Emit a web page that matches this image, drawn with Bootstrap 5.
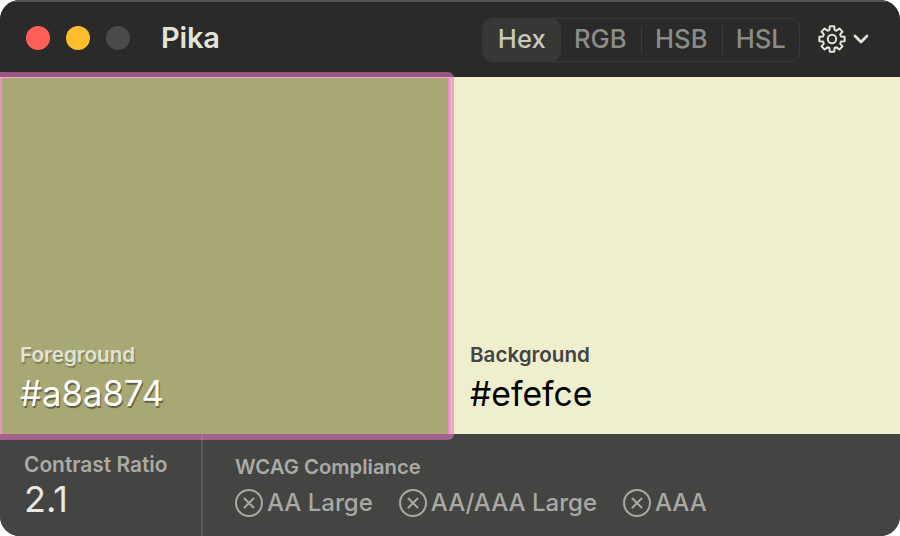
<!DOCTYPE html>
<html lang="en">
<head>
  <meta charset="UTF-8">
  <title>Pika</title>
  <link href="https://cdn.jsdelivr.net/npm/bootstrap@5.3.3/dist/css/bootstrap.min.css" rel="stylesheet">
  <style>
    body { background: #fff; font-family: Inter, "Liberation Sans", sans-serif; overflow: hidden; }
    .pika-window { width: 900px; height: 536px; border-radius: 20px; overflow: hidden; background: #444443; }

    .pika-titlebar { height: 77px; padding-left: 26px; padding-right: 31px; background: #2a2a2a; border-top: 2px solid #555; }
    .pika-light { width: 24px; height: 24px; border-radius: 50%; margin-right: 16px; margin-bottom: 3px; }
    .pika-title { margin-left: 15px; margin-bottom: 3px; font-size: 29px; font-weight: 600; color: #e3e3d8; letter-spacing: -.2px; }

    .pika-seg { width: 318px; height: 44px; border: 1px solid #383838; border-radius: 10px; }
    .pika-seg-item { height: 100%; font-size: 25.6px; font-weight: 500; color: #8c8c87; }
    .pika-seg-item.is-on { background: #373736; border-radius: 9px; color: #c8c8b8; }
    .pika-w-hex { width: 78px; }
    .pika-w-rgb { width: 80px; }
    .pika-w-hsb { width: 79px; }
    .pika-w-hsl { width: 77px; }
    .pika-seg-rule { width: 1px; height: 28px; background: #3c3c3c; margin-left: 1px; }
    .pika-gear { width: 28px; height: 28px; margin-left: 18px; margin-right: 7px; margin-bottom: 1px; }
    .pika-chev { width: 16px; height: 10px; margin-bottom: 1px; }

    .pika-swatches { height: 357px; background: #efefce; }
    .pika-swatch { padding-bottom: 20px; }
    .pika-fg { width: 448px; margin-top: 1px; padding-left: 20px; background: #a8a874; border-radius: 2px;
      box-shadow: inset 1.5px 0 0 #e79ac4, 1.5px 0 0 #e58bc0, 0 0 0 6px rgba(240, 120, 195, .57); position: relative; z-index: 1; }
    .pika-bg { padding-left: 22px; }
    .pika-swatch-name { font-size: 20.6px; font-weight: 600; line-height: 24px; margin-bottom: 6px; }
    .pika-swatch-hex { line-height: 41px; }
    .pika-fg .pika-swatch-name { color: #e2e2d6; text-shadow: 1px 2px 1px rgba(0, 0, 0, .25); }
    .pika-fg .pika-swatch-hex { font-size: 34.7px; color: #fff; text-shadow: 1px 2px 1px rgba(0, 0, 0, .45); }
    .pika-bg .pika-swatch-name { color: #444; }
    .pika-bg .pika-swatch-hex { font-size: 33.7px; color: #000; }

    .pika-footer { height: 102px; background: #444443; }
    .pika-ratio { width: 203px; padding-left: 24px; padding-top: 19px; border-right: 2px solid #5b5b5a; }
    .pika-label { font-size: 20.3px; font-weight: 600; line-height: 24px; color: #aaaaa6; }
    .pika-ratio .pika-label { font-size: 20.9px; }
    .pika-ratio-value { font-size: 36px; line-height: 44px; color: #e8e8e0; }
    .pika-wcag { padding-left: 32px; padding-top: 21px; }
    .pika-checks { gap: 26px; margin-top: 6px; }
    .pika-check { font-size: 24px; font-weight: 500; line-height: 36px; color: #a8a8a4; gap: 4px; }
    .pika-x { width: 28px; height: 28px; }
  </style>
</head>

<body class="m-0">
  <div class="pika-window d-flex flex-column">

    <div class="pika-titlebar d-flex align-items-center">
      <span class="pika-light" style="background:#ff5f57"></span>
      <span class="pika-light" style="background:#febc2e"></span>
      <span class="pika-light" style="background:#4a4a4a"></span>
      <span class="pika-title">Pika</span>

      <div class="pika-seg d-flex align-items-center ms-auto">
        <div class="pika-seg-item pika-w-hex is-on d-flex align-items-center justify-content-center">Hex</div>
        <div class="pika-seg-item pika-w-rgb d-flex align-items-center justify-content-center">RGB</div>
        <div class="pika-seg-rule"></div>
        <div class="pika-seg-item pika-w-hsb d-flex align-items-center justify-content-center">HSB</div>
        <div class="pika-seg-rule"></div>
        <div class="pika-seg-item pika-w-hsl d-flex align-items-center justify-content-center">HSL</div>
      </div>

      <svg class="pika-gear" viewBox="0 0 24 24" fill="none" stroke="#e3e3d8" stroke-width="1.7" stroke-linejoin="round">
        <path d="M10.09 1.17L13.91 1.17L14.21 4.31L15.88 5L18.31 2.99L21.01 5.69L19 8.12L19.69 9.79L22.83 10.09L22.83 13.91L19.69 14.21L19 15.88L21.01 18.31L18.31 21.01L15.88 19L14.21 19.69L13.91 22.83L10.09 22.83L9.79 19.69L8.12 19L5.69 21.01L2.99 18.31L5 15.88L4.31 14.21L1.17 13.91L1.17 10.09L4.31 9.79L5 8.12L2.99 5.69L5.69 2.99L8.12 5L9.79 4.31Z"/>
        <circle cx="12" cy="12" r="3.6"/>
      </svg>
      <svg class="pika-chev" viewBox="0 0 16 10" fill="none" stroke="#e3e3d8" stroke-width="2.8" stroke-linecap="round" stroke-linejoin="round">
        <path d="M2 2L8 8L14 2"/>
      </svg>
    </div>

    <div class="pika-swatches d-flex">
      <div class="pika-swatch pika-fg d-flex flex-column justify-content-end">
        <div class="pika-swatch-name">Foreground</div>
        <div class="pika-swatch-hex">#a8a874</div>
      </div>
      <div class="pika-swatch pika-bg d-flex flex-column justify-content-end flex-grow-1">
        <div class="pika-swatch-name">Background</div>
        <div class="pika-swatch-hex">#efefce</div>
      </div>
    </div>

    <div class="pika-footer d-flex">
      <div class="pika-ratio">
        <div class="pika-label">Contrast Ratio</div>
        <div class="pika-ratio-value">2.1</div>
      </div>
      <div class="pika-wcag">
        <div class="pika-label">WCAG Compliance</div>
        <div class="pika-checks d-flex">
          <div class="pika-check d-flex align-items-center">
            <svg class="pika-x" viewBox="0 0 28 28" fill="none" stroke="#a8a8a4" stroke-width="2" stroke-linecap="round"><circle cx="14" cy="14" r="13"/><path d="M9.5 9.5L18.5 18.5M18.5 9.5L9.5 18.5"/></svg>
            AA Large
          </div>
          <div class="pika-check d-flex align-items-center">
            <svg class="pika-x" viewBox="0 0 28 28" fill="none" stroke="#a8a8a4" stroke-width="2" stroke-linecap="round"><circle cx="14" cy="14" r="13"/><path d="M9.5 9.5L18.5 18.5M18.5 9.5L9.5 18.5"/></svg>
            AA/AAA Large
          </div>
          <div class="pika-check d-flex align-items-center">
            <svg class="pika-x" viewBox="0 0 28 28" fill="none" stroke="#a8a8a4" stroke-width="2" stroke-linecap="round"><circle cx="14" cy="14" r="13"/><path d="M9.5 9.5L18.5 18.5M18.5 9.5L9.5 18.5"/></svg>
            AAA
          </div>
        </div>
      </div>
    </div>

  </div>
  <script src="https://cdn.jsdelivr.net/npm/bootstrap@5.3.3/dist/js/bootstrap.bundle.min.js"></script>
</body>
</html>
